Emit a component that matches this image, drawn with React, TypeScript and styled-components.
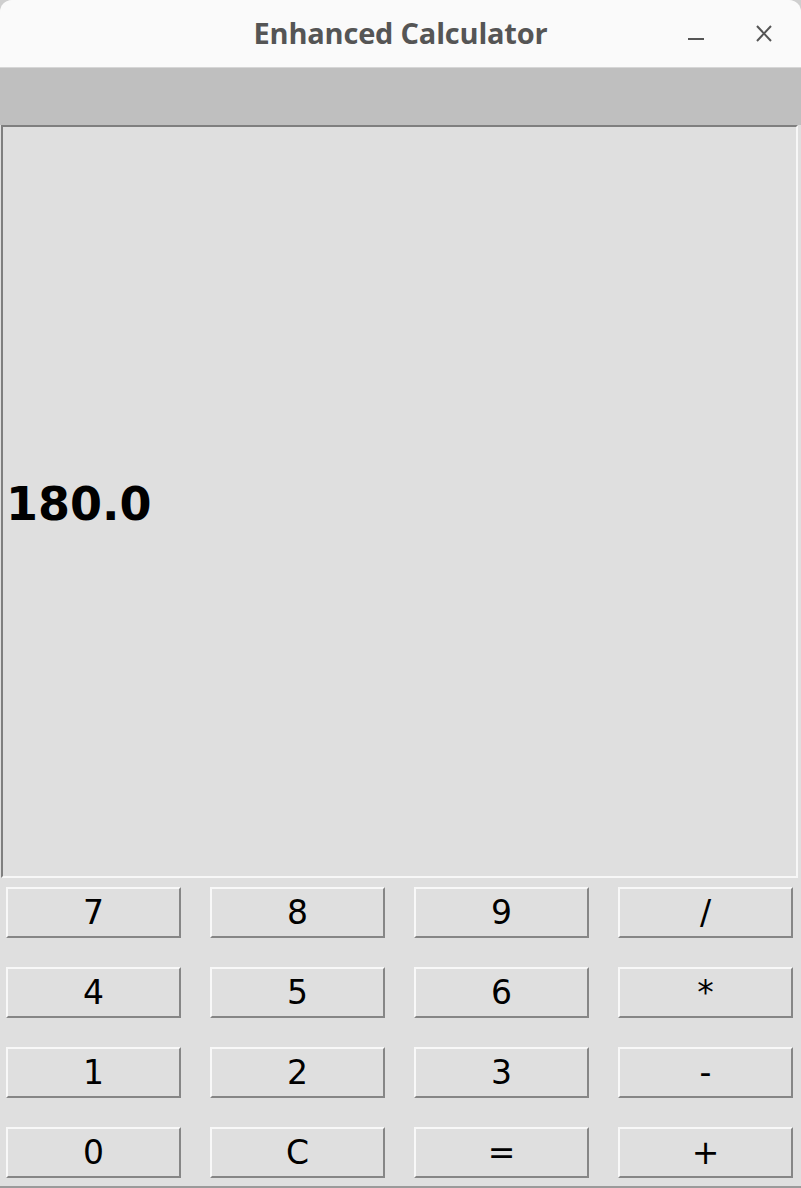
import React from 'react';
import styled, { createGlobalStyle } from 'styled-components';

const GlobalStyle = createGlobalStyle`
  html, body {
    margin: 0;
    padding: 0;
    background: #cfcfcf;
  }
`;

const Window = styled.div`
  width: 801px;
  height: 1188px;
  display: flex;
  flex-direction: column;
  background: #dfdfdf;
  border-radius: 12px 12px 0 0;
  overflow: hidden;
  box-sizing: border-box;
  border-bottom: 2px solid #9a9a9a;
`;

const TitleBar = styled.div`
  height: 67px;
  flex-shrink: 0;
  background: #fafafa;
  border-bottom: 1px solid #d6d6d6;
  display: grid;
  grid-template-columns: 1fr auto 1fr;
  align-items: center;
`;

const Title = styled.div`
  grid-column: 2;
  font-family: 'Open Sans', 'DejaVu Sans', sans-serif;
  font-weight: 700;
  font-size: 29px;
  color: #555;
  letter-spacing: -0.2px;
  padding-bottom: 3px;
`;

const Controls = styled.div`
  grid-column: 3;
  justify-self: end;
  display: flex;
  align-items: center;
  gap: 36px;
  padding-right: 21px;
`;

const ControlButton = styled.div`
  width: 32px;
  height: 32px;
  display: flex;
  align-items: center;
  justify-content: center;
  color: #555;
`;

const Toolbar = styled.div`
  height: 57px;
  flex-shrink: 0;
  background: #bfbfbf;
`;

const Display = styled.div`
  height: 753px;
  flex-shrink: 0;
  margin: 0 3px 0 1px;
  box-sizing: border-box;
  border-top: 2px solid #7f7f7f;
  border-left: 2px solid #7f7f7f;
  border-right: 2px solid #f7f7f7;
  border-bottom: 2px solid #f7f7f7;
  background: #dfdfdf;
  display: flex;
  align-items: center;
  padding-left: 3px;
`;

const Result = styled.div`
  font-family: 'DejaVu Sans', sans-serif;
  font-weight: 700;
  font-size: 46px;
  color: #000;
  padding-top: 4px;
`;

const Keypad = styled.div`
  display: grid;
  grid-template-columns: repeat(4, 175px);
  grid-auto-rows: 51px;
  column-gap: 29px;
  row-gap: 29px;
  padding: 9px 0 0 6px;
`;

const Key = styled.button`
  margin: 0;
  padding: 0;
  box-sizing: border-box;
  background: #dfdfdf;
  border-top: 2px solid #f8f8f8;
  border-left: 2px solid #f8f8f8;
  border-right: 2px solid #868686;
  border-bottom: 2px solid #868686;
  border-radius: 0;
  font-family: 'DejaVu Sans', sans-serif;
  font-size: 33px;
  color: #000;
  display: flex;
  align-items: center;
  justify-content: center;
  line-height: 1;
`;

const keys = ['7', '8', '9', '/', '4', '5', '6', '*', '1', '2', '3', '-', '0', 'C', '=', '+'];

const App: React.FC = () => {
  return (
    <>
      <GlobalStyle />
      <Window>
        <TitleBar>
          <Title>Enhanced Calculator</Title>
          <Controls>
            <ControlButton>
              <svg width="18" height="18" viewBox="0 0 18 18">
                <line x1="1" y1="14" x2="17" y2="14" stroke="currentColor" strokeWidth="2" />
              </svg>
            </ControlButton>
            <ControlButton>
              <svg width="18" height="18" viewBox="0 0 18 18">
                <path d="M2 1 L16 16 M16 1 L2 16" stroke="currentColor" strokeWidth="2" fill="none" />
              </svg>
            </ControlButton>
          </Controls>
        </TitleBar>
        <Toolbar />
        <Display>
          <Result>180.0</Result>
        </Display>
        <Keypad>
          {keys.map((k) => (
            <Key key={k}>{k}</Key>
          ))}
        </Keypad>
      </Window>
    </>
  );
};

export default App;
